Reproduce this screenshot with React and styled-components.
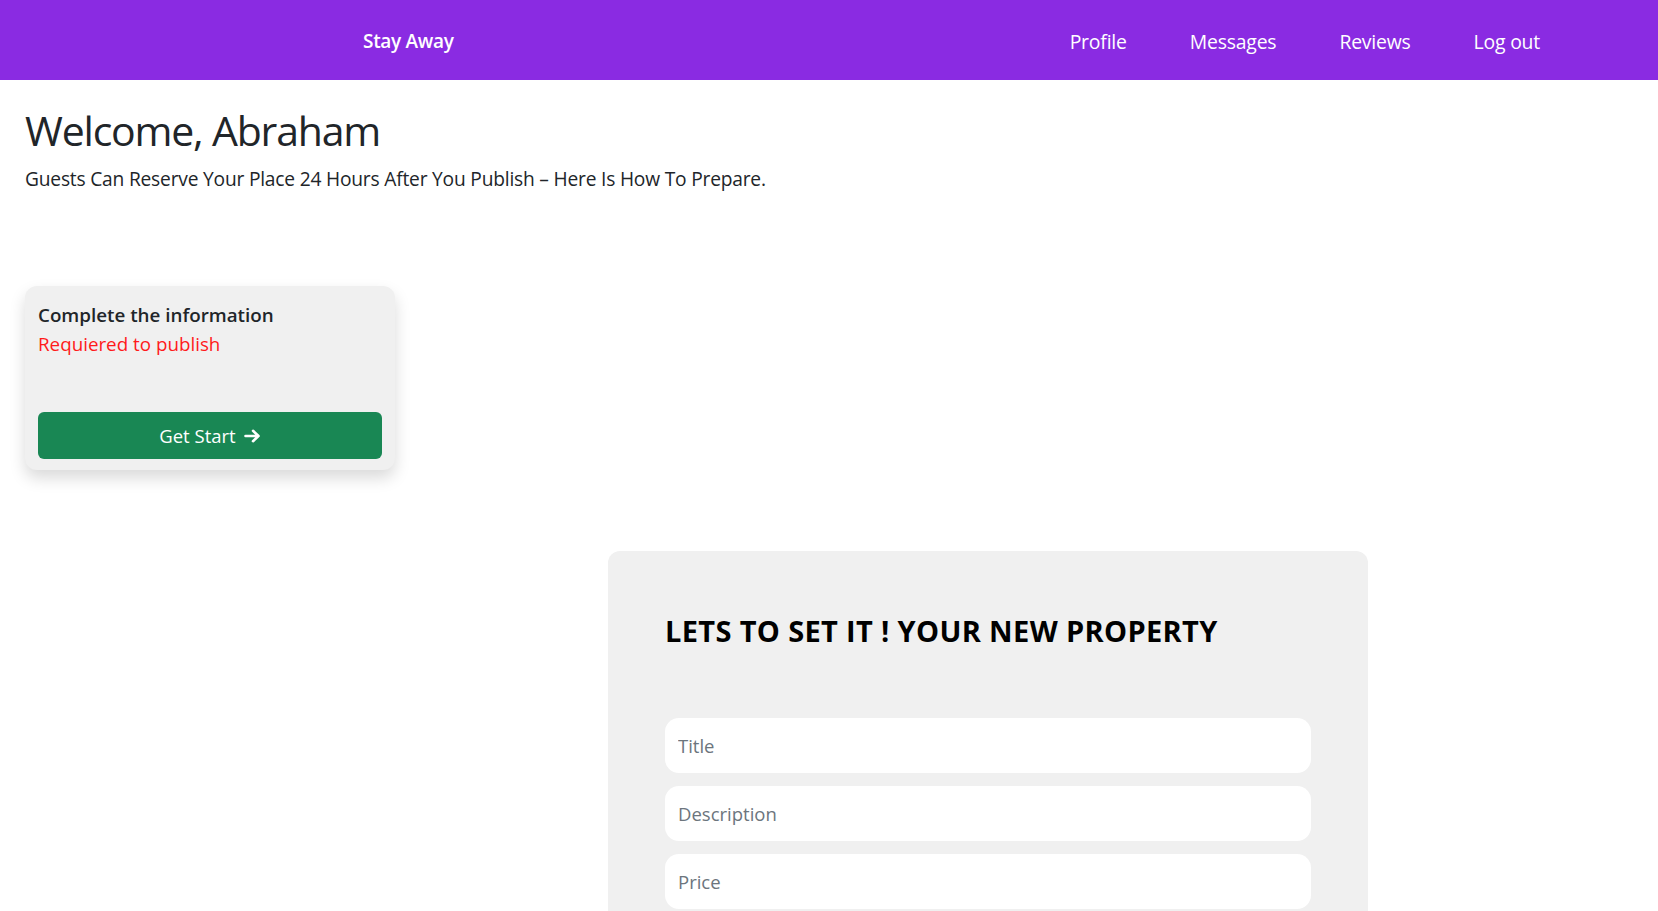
import React from 'react';
import styled, { createGlobalStyle } from 'styled-components';

const GlobalStyle = createGlobalStyle`
  body {
    margin: 0;
    background: #fff;
    font-family: 'Open Sans', 'Noto Sans', sans-serif;
    color: #212529;
  }
  * { box-sizing: border-box; }
`;

const Navbar = styled.nav`
  height: 80px;
  background: #8a2be2;
  display: flex;
  align-items: center;
  justify-content: space-between;
  padding: 2px 118px 0 363px;
`;

const Brand = styled.a`
  color: #fff;
  font-size: 19px;
  font-weight: 600;
  letter-spacing: -0.3px;
  text-decoration: none;
`;

const NavLinks = styled.div`
  display: flex;
  gap: 63px;
`;

const NavLink = styled.a`
  color: #fff;
  font-size: 19.4px;
  letter-spacing: -0.2px;
  text-decoration: none;
`;

const Main = styled.main`
  padding: 0 25px;
`;

const Heading = styled.h1`
  margin: 26px 0 0;
  font-size: 41px;
  font-weight: 500;
  line-height: 1.2;
  letter-spacing: -1.2px;
`;

const Lead = styled.p`
  margin: 9.5px 0 0;
  font-size: 19.2px;
  font-weight: 400;
  line-height: 1.5;
  letter-spacing: -0.2px;
`;

const TaskCard = styled.div`
  margin-top: 93px;
  width: 370px;
  height: 184px;
  background: #f0f0f0;
  border-radius: 12px;
  box-shadow: 0 8px 16px rgba(0, 0, 0, 0.15);
  padding: 15px 13px 11px;
  display: flex;
  flex-direction: column;
`;

const TaskTitle = styled.div`
  font-size: 18.8px;
  font-weight: 600;
  line-height: 28px;
`;

const TaskNote = styled.div`
  font-size: 18.8px;
  line-height: 30px;
  color: #ff1a1a;
`;

const StartButton = styled.button`
  margin-top: auto;
  height: 47px;
  border: none;
  border-radius: 6px;
  background: #198754;
  color: #fff;
  font-family: inherit;
  font-size: 18.5px;
  display: flex;
  align-items: center;
  justify-content: center;
  gap: 8px;
  cursor: pointer;
`;

const FormCard = styled.section`
  margin: 81px 0 0 583px;
  width: 760px;
  background: #f0f0f0;
  border-radius: 12px 12px 0 0;
  padding: 63px 57px 40px;
`;

const FormTitle = styled.h3`
  margin: 0 0 69px;
  font-size: 29px;
  font-weight: 700;
  color: #000;
  letter-spacing: 0.35px;
  line-height: 1.2;
`;

const Fields = styled.div`
  display: flex;
  flex-direction: column;
  gap: 13px;
`;

const Field = styled.input`
  width: 100%;
  height: 55px;
  border: none;
  border-radius: 14px;
  background: #fff;
  padding: 0 13px;
  font-family: inherit;
  font-size: 18.5px;
  color: #212529;
  outline: none;
  &::placeholder {
    color: #6c757d;
  }
`;

const Arrow = () => (
  <svg width="17" height="14" viewBox="0 0 17 14" fill="none">
    <path d="M1.5 7h13M9 1.8L14.5 7 9 12.2" stroke="#fff" strokeWidth="2.6" strokeLinecap="round" strokeLinejoin="round" />
  </svg>
);

const links = ['Profile', 'Messages', 'Reviews', 'Log out'];
const fields = ['Title', 'Description', 'Price'];

export default function App() {
  return (
    <>
      <GlobalStyle />
      <Navbar>
        <Brand href="#">Stay Away</Brand>
        <NavLinks>
          {links.map((l) => (
            <NavLink key={l} href="#">{l}</NavLink>
          ))}
        </NavLinks>
      </Navbar>
      <Main>
        <Heading>Welcome, Abraham</Heading>
        <Lead>Guests Can Reserve Your Place 24 Hours After You Publish – Here Is How To Prepare.</Lead>
        <TaskCard>
          <TaskTitle>Complete the information</TaskTitle>
          <TaskNote>Requiered to publish</TaskNote>
          <StartButton>Get Start <Arrow /></StartButton>
        </TaskCard>
        <FormCard>
          <FormTitle>LETS TO SET IT ! YOUR NEW PROPERTY</FormTitle>
          <Fields>
            {fields.map((f) => (
              <Field key={f} placeholder={f} />
            ))}
          </Fields>
        </FormCard>
      </Main>
    </>
  );
}
